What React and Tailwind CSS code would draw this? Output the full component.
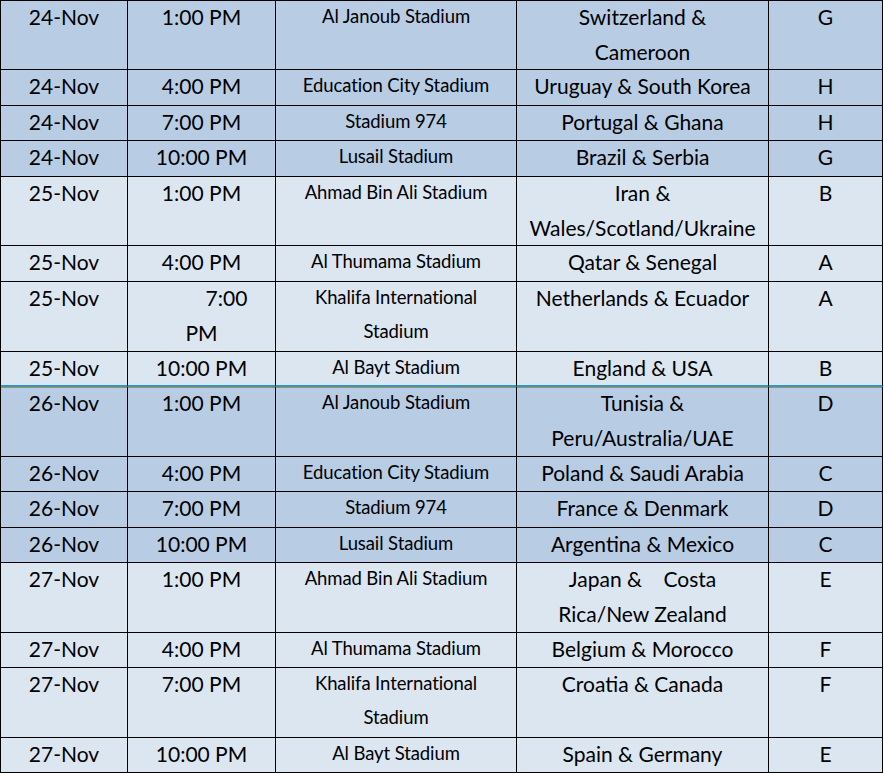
import React from 'react';

const rows = [
  { date: '24-Nov', time: '1:00 PM', venue: 'Al Janoub Stadium', match: ['Switzerland &', 'Cameroon'], group: 'G', h: 'h-[69px]', dark: true },
  { date: '24-Nov', time: '4:00 PM', venue: 'Education City Stadium', match: ['Uruguay & South Korea'], group: 'H', h: 'h-[36px]', dark: true },
  { date: '24-Nov', time: '7:00 PM', venue: 'Stadium 974', match: ['Portugal & Ghana'], group: 'H', h: 'h-[35px]', dark: true },
  { date: '24-Nov', time: '10:00 PM', venue: 'Lusail Stadium', match: ['Brazil & Serbia'], group: 'G', h: 'h-[36px]', dark: true },
  { date: '25-Nov', time: '1:00 PM', venue: 'Ahmad Bin Ali Stadium', match: ['Iran &', 'Wales/Scotland/Ukraine'], group: 'B', h: 'h-[69px]' },
  { date: '25-Nov', time: '4:00 PM', venue: 'Al Thumama Stadium', match: ['Qatar & Senegal'], group: 'A', h: 'h-[36px]' },
  { date: '25-Nov', time: 'split', venue: ['Khalifa International', 'Stadium'], match: ['Netherlands & Ecuador'], group: 'A', h: 'h-[70px]' },
  { date: '25-Nov', time: '10:00 PM', venue: 'Al Bayt Stadium', match: ['England & USA'], group: 'B', h: 'h-[35px]', divider: true },
  { date: '26-Nov', time: '1:00 PM', venue: 'Al Janoub Stadium', match: ['Tunisia &', 'Peru/Australia/UAE'], group: 'D', h: 'h-[70px]', dark: true, afterDivider: true },
  { date: '26-Nov', time: '4:00 PM', venue: 'Education City Stadium', match: ['Poland & Saudi Arabia'], group: 'C', h: 'h-[35px]', dark: true },
  { date: '26-Nov', time: '7:00 PM', venue: 'Stadium 974', match: ['France & Denmark'], group: 'D', h: 'h-[36px]', dark: true },
  { date: '26-Nov', time: '10:00 PM', venue: 'Lusail Stadium', match: ['Argentina & Mexico'], group: 'C', h: 'h-[35px]', dark: true },
  { date: '27-Nov', time: '1:00 PM', venue: 'Ahmad Bin Ali Stadium', match: ['Japan &    Costa', 'Rica/New Zealand'], group: 'E', h: 'h-[70px]' },
  { date: '27-Nov', time: '4:00 PM', venue: 'Al Thumama Stadium', match: ['Belgium & Morocco'], group: 'F', h: 'h-[35px]' },
  { date: '27-Nov', time: '7:00 PM', venue: ['Khalifa International', 'Stadium'], match: ['Croatia & Canada'], group: 'F', h: 'h-[70px]' },
  { date: '27-Nov', time: '10:00 PM', venue: 'Al Bayt Stadium', match: ['Spain & Germany'], group: 'E', h: 'h-[35px]' },
];

const Row = ({ row }) => {
  const bg = row.dark ? 'bg-[#b8cce4]' : 'bg-[#dce6f1]';
  // blue rule under the last 25-Nov row, orange rule on top of the first 26-Nov row
  const bottom = row.divider ? 'border-b-2 border-b-[#1d9bdc]' : 'border-b border-b-black';
  const top = row.afterDivider ? 'shadow-[inset_0_1px_0_#c98236]' : '';
  const cell = `border-r border-r-black ${bottom} ${top} text-center leading-[35px] whitespace-pre overflow-hidden`;
  const venue = Array.isArray(row.venue) ? row.venue : [row.venue];

  return (
    <div className={`flex ${row.h} ${bg}`}>
      <div className={`${cell} w-[127px] shrink-0`}>
        <div className="-mt-[2px]">{row.date}</div>
      </div>
      <div className={`${cell} w-[148px] shrink-0`}>
        <div className="-mt-[2px]">
          {row.time === 'split' ? (
            <>
              <div className="pl-[50px]">7:00</div>
              <div>PM</div>
            </>
          ) : (
            row.time
          )}
        </div>
      </div>
      <div className={`${cell} w-[241px] shrink-0 text-[18.5px] tracking-[-0.1px]`}>
        <div className="-mt-[2px]">
          {venue.map((v) => (
            <div key={v} className="leading-[34px]">{v}</div>
          ))}
        </div>
      </div>
      <div className={`${cell} w-[252px] shrink-0`}>
        <div className="-mt-[2px]">
          {row.match.map((m) => (
            <div key={m}>{m}</div>
          ))}
        </div>
      </div>
      <div className={`${cell} w-[114px] shrink-0`}>
        <div className="-mt-[2px]">{row.group}</div>
      </div>
    </div>
  );
};

const App = () => {
  return (
    <div className="w-[884px] h-[773px] bg-white overflow-hidden">
      <div
        className="w-[883px] border-l border-t border-black text-black text-[21px]"
        style={{ fontFamily: 'Lato, "Open Sans", sans-serif' }}
      >
        {rows.map((row, i) => (
          <Row key={i} row={row} />
        ))}
      </div>
    </div>
  );
};

export default App;
